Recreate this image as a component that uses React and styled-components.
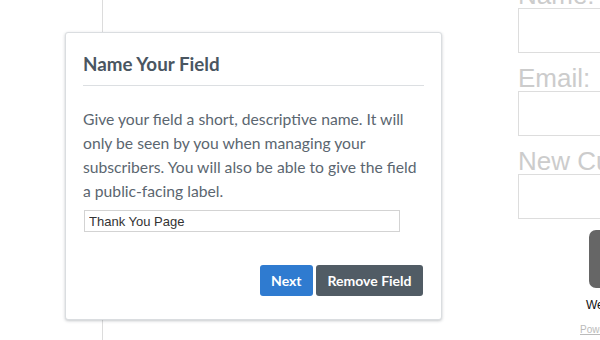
import React from "react";
import styled, { createGlobalStyle } from "styled-components";

const GlobalStyle = createGlobalStyle`
  html, body {
    margin: 0;
    padding: 0;
    background: #fff;
    overflow: hidden;
  }
`;

const Page = styled.div`
  width: 600px;
  height: 340px;
  overflow: hidden;
  display: flex;
  background: #fff;
`;

const Canvas = styled.div`
  position: relative;
  width: 518px;
  flex-shrink: 0;
  padding: 32px 0 0 65px;
  box-sizing: border-box;

  &::before {
    content: "";
    position: absolute;
    left: 102px;
    top: 0;
    bottom: 0;
    border-left: 1px solid #dcdcdc;
  }
`;

const Card = styled.div`
  position: relative;
  width: 377px;
  box-sizing: border-box;
  background: #fff;
  border: 1px solid #dadde0;
  border-radius: 3px;
  box-shadow: 0 1px 3px rgba(60, 70, 80, 0.3);
  padding: 0 17px 23px;
  font-family: Lato, "Open Sans", sans-serif;
`;

const Header = styled.div`
  padding: 19px 0 9px;
  border-bottom: 1px solid #dcdfe2;
`;

const Title = styled.h3`
  margin: 0;
  font-size: 18.8px;
  line-height: 24px;
  font-weight: 700;
  color: #4a5661;
`;

const Description = styled.p`
  margin: 21px 0 7px;
  max-width: 338px;
  font-size: 15.7px;
  line-height: 24px;
  color: #5b6670;
`;

const NameInput = styled.input`
  display: block;
  width: 316px;
  height: 22px;
  box-sizing: border-box;
  margin: 0 0 0 1px;
  padding: 0 4px;
  border: 1px solid #d3d3d3;
  font-family: "Liberation Sans", Arial, sans-serif;
  font-size: 13px;
  color: #333;
  outline: none;
`;

const Actions = styled.div`
  display: flex;
  justify-content: flex-end;
  gap: 3px;
  margin: 33px 1px 0 0;
`;

const Button = styled.button`
  height: 31px;
  padding: 0 11.5px;
  border: none;
  border-radius: 3px;
  background: ${(p) => (p.$primary ? "#2f7bd0" : "#515c65")};
  color: #fff;
  font-family: Lato, "Open Sans", sans-serif;
  font-size: 14px;
  font-weight: 700;
  cursor: pointer;
`;

const Preview = styled.div`
  width: 320px;
  flex-shrink: 0;
  margin-top: -18px;
  font-family: "Liberation Sans", Arial, sans-serif;
  display: flex;
  flex-direction: column;
`;

const FieldLabel = styled.div`
  font-size: 26px;
  line-height: 26px;
  color: #cccccc;
  white-space: nowrap;
  margin-top: ${(p) => (p.$first ? "0" : "12px")};
`;

const FieldBox = styled.div`
  height: 45px;
  box-sizing: border-box;
  border: 1px solid #dddddd;
`;

const SubmitButton = styled.div`
  margin: 11px 0 0 71px;
  width: 160px;
  height: 58px;
  border-radius: 7px;
  background: #666666;
`;

const Privacy = styled.div`
  margin: 10px 0 0 68px;
  font-size: 12px;
  line-height: 14px;
  color: #111;
  white-space: nowrap;
`;

const Powered = styled.a`
  margin: 12px 0 0 62px;
  font-size: 10px;
  line-height: 12px;
  color: #bbbbbb;
  text-decoration: underline;
  white-space: nowrap;
`;

const fields = ["Name:", "Email:", "New Custom Field:"];

export default function App() {
  return (
    <>
      <GlobalStyle />
      <Page>
        <Canvas>
          <Card>
            <Header>
              <Title>Name Your Field</Title>
            </Header>
            <Description>
              Give your field a short, descriptive name. It will only be seen
              by you when managing your subscribers. You will also be able to
              give the field a public-facing label.
            </Description>
            <NameInput defaultValue="Thank You Page" />
            <Actions>
              <Button $primary>Next</Button>
              <Button>Remove Field</Button>
            </Actions>
          </Card>
        </Canvas>
        <Preview>
          {fields.map((f, i) => (
            <React.Fragment key={f}>
              <FieldLabel $first={i === 0}>{f}</FieldLabel>
              <FieldBox />
            </React.Fragment>
          ))}
          <SubmitButton />
          <Privacy>We respect your privacy.</Privacy>
          <Powered>Powered by ConvertKit</Powered>
        </Preview>
      </Page>
    </>
  );
}
